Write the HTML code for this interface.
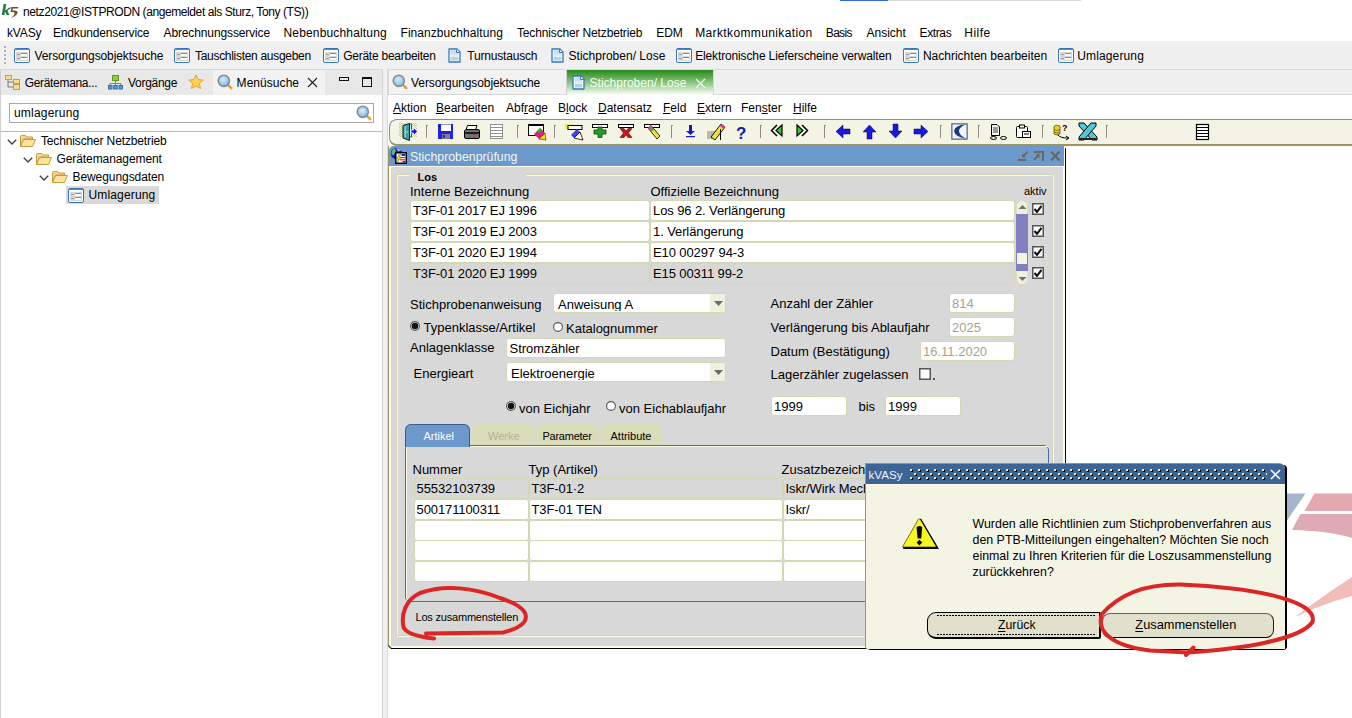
<!DOCTYPE html>
<html><head><meta charset="utf-8">
<style>
*{margin:0;padding:0;box-sizing:border-box}
html,body{width:1352px;height:718px;overflow:hidden;background:#fff;position:relative;font-family:"Liberation Sans",sans-serif;color:#000}
.a{position:absolute;white-space:pre;line-height:1}
.ui{font-size:12px;color:#000;letter-spacing:-0.15px}
.f{font-size:12.5px}
svg{position:absolute;overflow:visible}
</style></head><body>

<svg width="0" height="0" style="position:absolute">
<defs>
<symbol id="frm" viewBox="0 0 16 15"><rect x="0.5" y="0.5" width="15" height="14" rx="1.5" fill="#fff" stroke="#3577b6"/><rect x="1" y="1" width="14" height="1" fill="#3f8fd8"/><rect x="2" y="4" width="12" height="9" fill="#d8d8d8"/><rect x="3" y="6" width="3" height="1" fill="#9a9a9a"/><rect x="3" y="10" width="3" height="1" fill="#9a9a9a"/><rect x="7" y="5" width="6" height="3" fill="#fff"/><rect x="7" y="9" width="6" height="3" fill="#fff"/><rect x="7" y="5" width="6" height="1" fill="#8a8a8a"/><rect x="7" y="9" width="6" height="1" fill="#8a8a8a"/></symbol>
<symbol id="doc" viewBox="0 0 13 15"><linearGradient id="dg" x1="0" y1="0" x2="0" y2="1"><stop offset="0" stop-color="#b8d4e6"/><stop offset="0.6" stop-color="#e8f0f6"/><stop offset="0.62" stop-color="#b4d2e4"/><stop offset="1" stop-color="#b4d2e4"/></linearGradient><path d="M1 1 H9 L12 4 V14 H1 Z" fill="#fff" stroke="#3577b6" stroke-width="1.3" stroke-linejoin="round"/><rect x="2.5" y="2.5" width="8" height="10" fill="url(#dg)"/><path d="M8.5 1.5 V4.5 H11.5" fill="#fff" stroke="#3577b6" stroke-width="1"/></symbol>
<symbol id="mag" viewBox="0 0 16 16"><radialGradient id="mg" cx="0.45" cy="0.4" r="0.65"><stop offset="0" stop-color="#d8f0ff"/><stop offset="0.7" stop-color="#8cc4f0"/><stop offset="1" stop-color="#5aa0e0"/></radialGradient><path d="M10.8 10.8 L12.5 12.5" stroke="#9a9a9a" stroke-width="2.2"/><path d="M12.2 12.2 L14.2 14.2" stroke="#e8a030" stroke-width="2.6" stroke-linecap="round"/><circle cx="6.8" cy="6.8" r="5.6" fill="url(#mg)" stroke="#8a8a8a" stroke-width="1.5"/></symbol>
<symbol id="fold" viewBox="0 0 16 14"><path d="M0.5 2.5 Q0.5 1.5 1.5 1.5 H5.5 L7 3 H12.5 V5 H3.5 L0.5 12.5 Z" fill="#f4d890" stroke="#c89a40" stroke-width="1"/><path d="M0.5 12.5 L3.5 5.5 H15.5 L12.5 12.5 Z" fill="#fce4a0" stroke="#c89a40" stroke-width="1" stroke-linejoin="round"/></symbol>
<symbol id="chev" viewBox="0 0 10 6"><path d="M0.8 0.8 L5 5 L9.2 0.8" fill="none" stroke="#444" stroke-width="1.4"/></symbol>
</defs></svg>
<!-- progress bar top -->
<div class="a" style="left:840px;top:0;width:241px;height:1px;background:#dcdcdc"></div>
<div class="a" style="left:840px;top:0;width:48px;height:1px;background:#2a6ad8"></div>

<!-- title -->
<svg style="left:0;top:0" width="22" height="22" viewBox="0 0 22 22">
<path d="M3.6 4 H6.2 L4.4 15 H1.8 Z" fill="#1f7a48"/>
<path d="M4.6 10.8 L9.6 7.6 H12.2 L7.4 10.6 L9.4 15 H6.8 Z" fill="#1f7a48"/>
<path d="M11.5 7 H18.3 L17.8 8.6 H13 L12.4 10.6 Q17.5 10 17.6 12.6 Q17.4 15.5 11 18 Q14.8 15 14.6 13 Q14.3 11.8 10.6 12.2 Z" fill="#6e5424"/>
</svg>
<div class="a ui" style="left:23.10px;top:6px;letter-spacing:-0.410px">netz2021@ISTPRODN (angemeldet als Sturz, Tony (TS))</div>

<!-- menu bar -->
<div class="a ui" style="left:7px;top:27px">kVASy</div>
<div class="a ui" style="left:52.90px;top:27px;letter-spacing:-0.143px">Endkundenservice</div>
<div class="a ui" style="left:163.50px;top:27px;letter-spacing:-0.121px">Abrechnungsservice</div>
<div class="a ui" style="left:283.50px;top:27px;letter-spacing:0.163px">Nebenbuchhaltung</div>
<div class="a ui" style="left:400.50px;top:27px;letter-spacing:0.056px">Finanzbuchhaltung</div>
<div class="a ui" style="left:517px;top:27px">Technischer Netzbetrieb</div>
<div class="a ui" style="left:656.20px;top:27px;letter-spacing:-0.050px">EDM</div>
<div class="a ui" style="left:695.20px;top:27px;letter-spacing:0.374px">Marktkommunikation</div>
<div class="a ui" style="left:825.80px;top:27px;letter-spacing:-0.675px">Basis</div>
<div class="a ui" style="left:866.50px;top:27px;letter-spacing:0.000px">Ansicht</div>
<div class="a ui" style="left:919.60px;top:27px;letter-spacing:-0.390px">Extras</div>
<div class="a ui" style="left:964.30px;top:27px;letter-spacing:0.475px">Hilfe</div>

<!-- toolbar -->
<div class="a" style="left:0;top:41px;width:1352px;height:29px;background:#f0f0f0;border-bottom:1px solid #dadada"></div>
<div id="toolbar">
<div class="a" style="left:4px;top:46px;width:2px;height:2px;background:#b0b0b0"></div>
<div class="a" style="left:4px;top:50px;width:2px;height:2px;background:#b0b0b0"></div>
<div class="a" style="left:4px;top:54px;width:2px;height:2px;background:#b0b0b0"></div>
<div class="a" style="left:4px;top:58px;width:2px;height:2px;background:#b0b0b0"></div>
<div class="a" style="left:4px;top:62px;width:2px;height:2px;background:#b0b0b0"></div>
<svg style="left:14px;top:48px" width="16" height="15"><use href="#frm"/></svg>
<div class="a ui" style="left:34.50px;top:50px;letter-spacing:-0.120px">Versorgungsobjektsuche</div>
<svg style="left:174px;top:48px" width="16" height="15"><use href="#frm"/></svg>
<div class="a ui" style="left:195.00px;top:50px;letter-spacing:-0.300px">Tauschlisten ausgeben</div>
<svg style="left:323px;top:48px" width="16" height="15"><use href="#frm"/></svg>
<div class="a ui" style="left:343.20px;top:50px;letter-spacing:-0.249px">Geräte bearbeiten</div>
<svg style="left:448px;top:48px" width="13" height="15"><use href="#doc"/></svg>
<div class="a ui" style="left:467.20px;top:50px;letter-spacing:-0.177px">Turnustausch</div>
<svg style="left:551px;top:48px" width="13" height="15"><use href="#doc"/></svg>
<div class="a ui" style="left:568.60px;top:50px;letter-spacing:-0.001px">Stichproben/ Lose</div>
<svg style="left:676px;top:48px" width="16" height="15"><use href="#frm"/></svg>
<div class="a ui" style="left:695.20px;top:50px;letter-spacing:-0.139px">Elektronische Lieferscheine verwalten</div>
<svg style="left:903px;top:48px" width="16" height="15"><use href="#frm"/></svg>
<div class="a ui" style="left:922.90px;top:50px;letter-spacing:0.007px">Nachrichten bearbeiten</div>
<svg style="left:1058px;top:48px" width="16" height="15"><use href="#frm"/></svg>
<div class="a ui" style="left:1077.30px;top:50px;letter-spacing:0.127px">Umlagerung</div>
</div>

<!-- left panel -->
<div class="a" style="left:0;top:69px;width:383px;height:650px;background:#fff;border:1px solid #d0d0d0;border-top-color:#d8d8d8;border-bottom:none"></div>
<div class="a" style="left:1px;top:70px;width:381px;height:25px;background:#e8e8e8"></div>
<div class="a" style="left:213px;top:70px;width:112px;height:25px;background:#f2f2f2"></div>
<div class="a" style="left:382px;top:69px;width:6px;height:649px;background:#f0f0f0;border-left:1px solid #d4d4d4;border-right:1px solid #d8d8d8"></div>
<div id="lefttabs">
<svg style="left:5px;top:75px" width="16" height="15" viewBox="0 0 16 15"><path d="M3 3 V12 H9 M3 7 H9" fill="none" stroke="#7a7a7a" stroke-width="1"/><rect x="0.5" y="0.5" width="6" height="4" fill="#f8dc90" stroke="#c8a040"/><rect x="8.5" y="4.5" width="6" height="4" fill="#f8dc90" stroke="#c8a040"/><rect x="8.5" y="9.5" width="6" height="5" fill="#f8dc90" stroke="#c8a040"/></svg>
<div class="a ui" style="left:24.70px;top:77px;letter-spacing:-0.316px">Gerätemana...</div>
<svg style="left:108px;top:75px" width="15" height="15" viewBox="0 0 15 15"><rect x="4.5" y="0.5" width="6" height="5" fill="#8cd040" stroke="#5a9a20"/><path d="M7.5 6 V8 M2 10 V8.5 H13 V10 M7.5 8.5 V10" fill="none" stroke="#808080"/><rect x="0.5" y="10.5" width="3.5" height="3.5" fill="#5a9ad8" stroke="#3070b0"/><rect x="5.75" y="10.5" width="3.5" height="3.5" fill="#5a9ad8" stroke="#3070b0"/><rect x="11" y="10.5" width="3.5" height="3.5" fill="#5a9ad8" stroke="#3070b0"/></svg>
<div class="a ui" style="left:128.00px;top:77px;letter-spacing:-0.293px">Vorgänge</div>
<svg style="left:188px;top:74px" width="16" height="16" viewBox="0 0 16 16"><path d="M8 0.8 L10.2 5.5 L15.2 6 L11.4 9.4 L12.5 14.5 L8 11.9 L3.5 14.5 L4.6 9.4 L0.8 6 L5.8 5.5 Z" fill="#fcd050" stroke="#e0a030" stroke-width="0.9" stroke-linejoin="round"/></svg>
<svg style="left:217px;top:74px" width="16" height="16"><use href="#mag"/></svg>
<div class="a ui" style="left:236.60px;top:77px;letter-spacing:0.050px">Menüsuche</div>
<svg style="left:307px;top:77px" width="11" height="11" viewBox="0 0 11 11"><path d="M1 1 L10 10 M10 1 L1 10" stroke="#222" stroke-width="1.1"/></svg>
<div class="a" style="left:339px;top:77px;width:10px;height:4px;border:1.5px solid #111"></div>
<div class="a" style="left:362px;top:77px;width:10px;height:10px;border:1.5px solid #111;border-top-width:2.5px"></div>
</div>
<!-- search -->
<div class="a" style="left:9px;top:103px;width:365px;height:20px;border:1px solid #a8a8a8;background:#fff"></div>
<div class="a ui" style="left:13.90px;top:107px;letter-spacing:0.217px">umlagerung</div>
<svg style="left:356px;top:105px" width="16" height="16"><use href="#mag"/></svg>
<div class="a" style="left:1px;top:131px;width:381px;height:1px;background:#b8b8b8"></div>
<div id="tree">
<svg style="left:7px;top:139px" width="10" height="6"><use href="#chev"/></svg>
<svg style="left:20px;top:134px" width="16" height="14"><use href="#fold"/></svg>
<div class="a ui" style="left:40.90px;top:135px;letter-spacing:-0.136px">Technischer Netzbetrieb</div>
<svg style="left:23px;top:157px" width="10" height="6"><use href="#chev"/></svg>
<svg style="left:36px;top:152px" width="16" height="14"><use href="#fold"/></svg>
<div class="a ui" style="left:56.50px;top:153px;letter-spacing:-0.090px">Gerätemanagement</div>
<svg style="left:39px;top:175px" width="10" height="6"><use href="#chev"/></svg>
<svg style="left:52px;top:170px" width="16" height="14"><use href="#fold"/></svg>
<div class="a ui" style="left:72.50px;top:171px;letter-spacing:-0.073px">Bewegungsdaten</div>
<div class="a" style="left:66px;top:186px;width:93px;height:18px;background:#d9d9d9"></div>
<svg style="left:68px;top:188px" width="16" height="15"><use href="#frm"/></svg>
<div class="a ui" style="left:88.50px;top:189px;letter-spacing:0.150px">Umlagerung</div>
</div>

<!-- right panel -->
<div class="a" style="left:388px;top:69px;width:964px;height:26px;background:#f0f0f0;border-top:1px solid #d8d8d8"></div>
<div class="a" style="left:388px;top:69px;width:179px;height:26px;background:#f2f2f2;border:1px solid #d8d8d8;border-right-color:#d0d0d0"></div>
<div class="a" style="left:567px;top:70px;width:146px;height:25px;background:linear-gradient(#24881a,#4ea040 20%,#8cc480 50%,#d0e8c8 80%,#fff)"></div>
<div class="a" style="left:388px;top:95px;width:964px;height:623px;background:#fff"></div>
<div class="a" style="left:713px;top:69px;width:639px;height:26px;border-left:1px solid #d8d8d8;border-top:1px solid #d8d8d8;border-bottom:1px solid #d8d8d8"></div>
<div id="righttabs">
<svg style="left:392px;top:74px" width="16" height="16"><use href="#mag"/></svg>
<div class="a ui" style="left:411.10px;top:77px;letter-spacing:-0.111px">Versorgungsobjektsuche</div>
<svg style="left:572px;top:75px" width="13" height="15"><use href="#doc"/></svg>
<div class="a ui" style="left:589.6px;top:77px;letter-spacing:-0.001px;color:#f4fff0">Stichproben/ Lose</div>
<svg style="left:695px;top:78px" width="11" height="11" viewBox="0 0 11 11"><path d="M1 1 L10 10 M10 1 L1 10" stroke="#f0fff0" stroke-width="1.1"/></svg>
</div>

<!-- oracle menubar -->
<div class="a" style="left:393px;top:102px;font-size:12px;"><u style="text-decoration:underline;text-underline-offset:1px">A</u>ktion</div>
<div class="a" style="left:436px;top:102px;font-size:12px;"><u style="text-decoration:underline;text-underline-offset:1px">B</u>earbeiten</div>
<div class="a" style="left:506px;top:102px;font-size:12px;">Abf<u style="text-decoration:underline;text-underline-offset:1px">r</u>age</div>
<div class="a" style="left:558px;top:102px;font-size:12px;">B<u style="text-decoration:underline;text-underline-offset:1px">l</u>ock</div>
<div class="a" style="left:598px;top:102px;font-size:12px;"><u style="text-decoration:underline;text-underline-offset:1px">D</u>atensatz</div>
<div class="a" style="left:663px;top:102px;font-size:12px;"><u style="text-decoration:underline;text-underline-offset:1px">F</u>eld</div>
<div class="a" style="left:697px;top:102px;font-size:12px;"><u style="text-decoration:underline;text-underline-offset:1px">E</u>xtern</div>
<div class="a" style="left:741px;top:102px;font-size:12px;">Fen<u style="text-decoration:underline;text-underline-offset:1px">s</u>ter</div>
<div class="a" style="left:793px;top:102px;font-size:12px;"><u style="text-decoration:underline;text-underline-offset:1px">H</u>ilfe</div>
<div class="a" style="left:389px;top:119px;width:963px;height:27px;background:#f4f4e4;border-top:1px solid #8e8e8e;border-bottom:2px solid #9c9664;border-radius:8px 0 0 8px;border-left:1px solid #8e8e8e"></div>
<!-- oracle toolbar icons -->
<svg style="left:0;top:0" width="1352" height="718" viewBox="0 0 1352 718">
<defs>
<pattern id="chk" width="2" height="2" patternUnits="userSpaceOnUse"><rect width="2" height="2" fill="#f4f4e4"/><rect width="1" height="1" fill="#c8c8a8"/><rect x="1" y="1" width="1" height="1" fill="#c8c8a8"/></pattern>
</defs>
<!-- separators -->
<g fill="#8c8c8c">
<path d="M426 125h2v1h-1v12h-1z"/><path d="M517 125h2v1h-1v12h-1z"/><path d="M554 125h2v1h-1v12h-1z"/><path d="M671 125h2v1h-1v12h-1z"/>
<path d="M760 125h2v1h-1v12h-1z"/><path d="M824 125h2v1h-1v12h-1z"/><path d="M940 125h2v1h-1v12h-1z"/><path d="M978 125h2v1h-1v12h-1z"/>
<path d="M1042 125h2v1h-1v12h-1z"/><path d="M1106 125h2v1h-1v12h-1z"/>
</g>
<!-- exit -->
<rect x="399" y="123" width="18" height="14" fill="url(#chk)"/>
<path d="M409 124 H411.5 V137 H409 Z" fill="#a8f0f8" stroke="#203838" stroke-width="0.8"/>
<path d="M403 125.5 L409.5 123.5 V140.5 L403 138 Z" fill="#3a9ca4" stroke="#102828" stroke-width="1"/>
<path d="M404.5 126.5 L406 126 V137.5 L404.5 137 Z" fill="#8ad0d8"/>
<circle cx="407.2" cy="132" r="0.8" fill="#f0f040"/>
<path d="M411 130 H413.5 V127.5 L417.5 131.5 L413.5 135.5 V133 H411 Z" fill="#1818f0" stroke="#fff" stroke-width="0.7"/>
<!-- floppy -->
<path d="M438 124 H453 V139 H438 Z" fill="#2020f0"/>
<rect x="441" y="124.5" width="10" height="6.5" fill="#fff"/>
<rect x="442" y="134" width="8" height="5" fill="#808080"/><rect x="443" y="135" width="2" height="3" fill="#2020f0"/>
<rect x="439" y="126" width="1" height="1" fill="#000"/>
<!-- printer -->
<path d="M467.5 125.5 H477 L475.5 130 H466 Z" fill="#fff" stroke="#000" stroke-width="1"/>
<path d="M464.5 131 Q465 129.5 467 129.5 H478 Q479.5 129.5 479.5 131 V137 Q479.5 138.5 478 138.5 H466 Q464.5 138.5 464.5 137 Z" fill="#707070" stroke="#000" stroke-width="1"/>
<rect x="465" y="132" width="14" height="2" fill="#202020"/><rect x="473" y="134" width="2" height="1" fill="#e02020"/>
<!-- list gray -->
<rect x="490.5" y="124.5" width="12" height="14" fill="#fff" stroke="#909090"/>
<path d="M491 127.5h11M491 130.5h11M491 133.5h11M491 136.5h11" stroke="#909090"/>
<!-- query window pencil -->
<rect x="528.5" y="124.5" width="15" height="11" fill="#fff" stroke="#000"/><rect x="528" y="124" width="16" height="2" fill="#000"/>
<path d="M534 134 L540 128 L545 133 L539 139 Z" fill="#e02080"/><path d="M537 131 L540 128 L542 130 L539 133Z" fill="#20c020"/><path d="M539 139 L545 133 L546 140 Z" fill="#f0e020" stroke="#000" stroke-width="0.5"/>
<!-- highlighter -->
<rect x="565" y="124" width="8" height="5" fill="#f0f040"/><rect x="568" y="125.5" width="14" height="4" fill="#fff" stroke="#000" stroke-width="1"/>
<path d="M571 135 L577 129 L580 132 L574 138 Z" fill="#4040e0"/><path d="M574 138 L580 132 L583 140 Z" fill="#fff" stroke="#000" stroke-width="0.8"/>
<!-- green plus -->
<rect x="592.5" y="124.5" width="15" height="3" fill="#fff" stroke="#000"/>
<path d="M598 127 H602 V130 H606 V134 H602 V137.5 H598 V134 H594 V130 H598 Z" fill="#20a020" stroke="#104010" stroke-width="0.8"/>
<!-- red X -->
<rect x="618.5" y="124.5" width="15" height="3" fill="#fff" stroke="#000"/>
<path d="M620 128.5 L624 128.5 L626 131 L628 128.5 L632 128.5 L628.5 133 L632 137.5 L628 137.5 L626 135 L624 137.5 L620 137.5 L623.5 133 Z" fill="#c01818" stroke="#501010" stroke-width="0.6"/>
<!-- pencil clear -->
<rect x="644.5" y="124.5" width="15" height="3" fill="#fff" stroke="#000"/>
<path d="M648 128 L651 125.5 L660 136 L657 139 Z" fill="#f0e040" stroke="#000" stroke-width="0.8"/><path d="M648 128 L651 125.5 L653 128 L650 130.5Z" fill="#e040a0"/><path d="M650 130.5 L653 128 L654 129.5 L651 132Z" fill="#30b030"/>
<!-- blue down -->
<path d="M689 125 H692 V131 H695 L690.5 135 L686 131 H689 Z" fill="#1818c8"/><rect x="686" y="136" width="9" height="1.2" fill="#1818c8"/>
<!-- pencil lines -->
<path d="M707 132h8M707 134h7M707 136h8M707 138h6" stroke="#606060" stroke-width="0.8"/>
<path d="M711 137 L721 124 L725 127 L715 140 Z" fill="#f0e040" stroke="#000" stroke-width="0.9"/><path d="M721 124 L725 127 L723.5 129 L719.5 126Z" fill="#e040a0"/><rect x="720" y="129" width="1" height="11" fill="#000"/>
<!-- ? -->
<text x="736" y="139" font-family="Liberation Sans" font-weight="bold" font-size="17" fill="#1818a8">?</text>
<!-- << >> -->
<path d="M782 125 L776 130.5 L782 136 Z" fill="#30d030" stroke="#000" stroke-width="1.2"/><path d="M777 125 L771.5 130.5 L777 136" fill="none" stroke="#000" stroke-width="1.5"/>
<path d="M797 125 L803 130.5 L797 136 Z" fill="#30d030" stroke="#000" stroke-width="1.2"/><path d="M802 125 L807.5 130.5 L802 136" fill="none" stroke="#000" stroke-width="1.5"/>
<!-- arrows -->
<path d="M836 131.5 L843 125 V129 H850 V134 H843 V138 Z" fill="#1818e8" stroke="#000030" stroke-width="0.5"/>
<path d="M869.5 125 L876 132 H872 V139 H867 V132 H863 Z" fill="#1818e8" stroke="#000030" stroke-width="0.5"/>
<path d="M895.5 138 L902 131 H898 V124 H893 V131 H889 Z" fill="#1818e8" stroke="#000030" stroke-width="0.5"/>
<path d="M928 131.5 L921 125 V129 H914 V134 H921 V138 Z" fill="#1818e8" stroke="#000030" stroke-width="0.5"/>
<!-- moon -->
<rect x="951" y="123" width="17" height="17" fill="#a8b8c8"/><rect x="952" y="124" width="15" height="15" fill="#f0f4f8" stroke="#304870" stroke-width="0.8"/>
<path d="M966 124.5 Q955 125 954 131 Q955 137 966 138.5 Q959 135 959 131 Q959 127 966 124.5 Z" fill="#1a3a80"/>
<!-- doc glasses -->
<path d="M991.5 124.5 H997 L999.5 127 V135.5 H991.5 Z" fill="#fff" stroke="#000" stroke-width="1"/><path d="M993 128h5M993 130h5M993 132h5" stroke="#000" stroke-width="0.8"/>
<ellipse cx="993.5" cy="138" rx="3" ry="1.5" fill="none" stroke="#000" stroke-width="1"/><ellipse cx="1003.5" cy="138" rx="3" ry="1.5" fill="none" stroke="#000" stroke-width="1"/>
<!-- clipboard -->
<rect x="1016.5" y="126.5" width="11" height="11" rx="1" fill="#fff" stroke="#000"/><rect x="1019.5" y="125" width="5" height="3" fill="#fff" stroke="#000"/>
<rect x="1022.5" y="131.5" width="8" height="6" fill="#fff" stroke="#000"/><path d="M1024 134h5" stroke="#000"/>
<!-- db ? -->
<ellipse cx="1057" cy="127" rx="3" ry="1.8" fill="#f0d020" stroke="#404000" stroke-width="0.7"/><path d="M1054 127 V134 Q1057 136 1060 134 V127" fill="#f0d020" stroke="#404000" stroke-width="0.7"/><path d="M1054 129.5 Q1057 131.5 1060 129.5M1054 132 Q1057 134 1060 132" fill="none" stroke="#404000" stroke-width="0.6"/>
<text x="1062" y="131" font-family="Liberation Sans" font-weight="bold" font-size="9" fill="#000">?</text>
<path d="M1058 135 Q1060 138 1068 138" fill="none" stroke="#000" stroke-width="1"/><path d="M1066 136 L1069 138 L1066 140" fill="none" stroke="#000" stroke-width="1"/>
<!-- excel X -->
<path d="M1079 123 H1084 L1097 137 V140 H1092 L1079 126 Z" fill="#50c8d8" stroke="#000" stroke-width="1"/>
<path d="M1096 123 H1091 L1079 137 V140 H1084 L1096 126 Z" fill="#50c8d8" stroke="#000" stroke-width="1"/>
<rect x="1079" y="138" width="18" height="2" fill="#202020"/>
<!-- list right -->
<rect x="1196.5" y="124.5" width="12" height="15" fill="#fff" stroke="#000" stroke-width="1.2"/>
<path d="M1197 127.5h11M1197 130.5h11M1197 133.5h11M1197 136.5h11" stroke="#000" stroke-width="1.2"/>
</svg>

<!-- form window -->
<div class="a" style="left:388px;top:146px;width:678px;height:503px;background:#000;clip-path:polygon(0 0,calc(100% - 2px) 0,100% 3px,100% 100%,3px 100%,0 calc(100% - 3px))"></div>
<div class="a" style="left:388px;top:146px;width:677px;height:502px;background:#9c9664;clip-path:polygon(0 0,100% 0,100% 100%,3px 100%,0 calc(100% - 3px))"></div>
<div class="a" style="left:389px;top:146px;width:676px;height:502px;background:#fcfce8;clip-path:polygon(0 0,100% 0,100% 100%,3px 100%,0 calc(100% - 3px))"></div>
<div class="a" style="left:391px;top:167px;width:672px;height:479px;background:#d8d8d8"></div>
<div class="a" style="left:389px;top:146px;width:675px;height:20px;background:#6c98cc;clip-path:polygon(3px 0,100% 0,100% 100%,0 100%,0 3px)"></div>
<div class="a" style="left:410px;top:151px;font-size:12.3px;color:#eef8e8">Stichprobenprüfung</div>
<svg style="left:390px;top:147px" width="18" height="18" viewBox="0 0 18 18">
<circle cx="6.5" cy="6.5" r="5.8" fill="#1a1a9a"/><path d="M1.2 7 Q1.5 2.5 5 1.2 L6 4 L3.5 8.5 Z" fill="#58b878"/><path d="M6 1 Q10 1 11.5 3.5 L8 4.5Z" fill="#a8a8f0"/>
<rect x="5" y="5" width="12" height="12" fill="#000"/><rect x="6.5" y="6.5" width="9" height="9" fill="#fff"/>
<path d="M9.5 6.8 L6.8 11.8 H8.8 L7.2 15.5 L11.2 10.2 H9.2 L11 6.8 Z" fill="#f8f820" stroke="#303000" stroke-width="0.4"/>
<rect x="11.5" y="7" width="3.5" height="2" fill="#2020e8"/><rect x="10.5" y="10" width="4.5" height="1.2" fill="#e82020"/><rect x="10" y="12.2" width="5" height="1.2" fill="#e82020"/><rect x="12.5" y="14" width="2.5" height="1.5" fill="#2020e8"/>
</svg>
<svg style="left:1010px;top:145px" width="56" height="20" viewBox="1010 145 56 20">
<g fill="#6a6660">
<rect x="1018" y="159" width="8" height="2"/>
<path d="M1027 151 L1028.3 152.3 L1024.6 156 L1026 157.4 H1022 V153.4 L1023.3 154.7 Z"/>
<rect x="1034" y="151" width="10" height="2"/><rect x="1042" y="151" width="2" height="10"/>
<path d="M1034.7 160.5 L1033.4 159.2 L1037.1 155.5 L1035.7 154.1 H1039.7 V158.1 L1038.4 156.8 Z"/>
</g>
<path d="M1051 151.5 L1059.5 160.5 M1059.5 151.5 L1051 160.5" stroke="#6a6660" stroke-width="2.1"/>
</svg>
<div class="a" style="left:397px;top:175px;width:657px;height:462px;border:1px solid #f8f8e4"></div>
<div class="a" style="left:396px;top:174px;width:657px;height:462px;border:1px solid #d2d6b4"></div>
<div class="a" style="left:410px;top:173px;width:116px;height:4px;background:#d8d8d8"></div>
<div class="a" style="left:417.5px;top:172px;font-size:11px;font-weight:bold">Los</div>
<!-- fields -->
<div class="a" style="left:410px;top:184.7px;font-size:13px;">Interne Bezeichnung</div>
<div class="a" style="left:650.5px;top:184.7px;font-size:13px;">Offizielle Bezeichnung</div>
<div class="a" style="left:1024px;top:186.3px;font-size:11px;">aktiv</div>
<div class="a" style="left:410px;top:200px;width:240px;height:21px;background:#fff;border:1px solid #d4d8b0;border-radius:3px;"></div>
<div class="a" style="left:650px;top:200px;width:365px;height:21px;background:#fff;border:1px solid #d4d8b0;border-radius:3px;"></div>
<div class="a" style="left:413px;top:203.6px;font-size:13px;letter-spacing:-0.1px">T3F-01 2017 EJ 1996</div>
<div class="a" style="left:653px;top:203.6px;font-size:13px;letter-spacing:-0.1px">Los 96 2. Verlängerung</div>
<div class="a" style="left:410px;top:221px;width:240px;height:21px;background:#fff;border:1px solid #d4d8b0;border-radius:3px;"></div>
<div class="a" style="left:650px;top:221px;width:365px;height:21px;background:#fff;border:1px solid #d4d8b0;border-radius:3px;"></div>
<div class="a" style="left:413px;top:224.6px;font-size:13px;letter-spacing:-0.1px">T3F-01 2019 EJ 2003</div>
<div class="a" style="left:653px;top:224.6px;font-size:13px;letter-spacing:-0.1px">1. Verlängerung</div>
<div class="a" style="left:410px;top:242px;width:240px;height:21px;background:#fff;border:1px solid #d4d8b0;border-radius:3px;"></div>
<div class="a" style="left:650px;top:242px;width:365px;height:21px;background:#fff;border:1px solid #d4d8b0;border-radius:3px;"></div>
<div class="a" style="left:413px;top:245.6px;font-size:13px;letter-spacing:-0.1px">T3F-01 2020 EJ 1994</div>
<div class="a" style="left:653px;top:245.6px;font-size:13px;letter-spacing:-0.1px">E10 00297 94-3</div>
<div class="a" style="left:410px;top:263px;width:240px;height:21px;background:#d8d8d8;border:1px solid #d4d8b0;border-radius:3px;"></div>
<div class="a" style="left:650px;top:263px;width:365px;height:21px;background:#d8d8d8;border:1px solid #d4d8b0;border-radius:3px;"></div>
<div class="a" style="left:413px;top:266.6px;font-size:13px;letter-spacing:-0.1px">T3F-01 2020 EJ 1999</div>
<div class="a" style="left:653px;top:266.6px;font-size:13px;letter-spacing:-0.1px">E15 00311 99-2</div>
<div class="a" style="left:1016px;top:200px;width:12px;height:85px;background:#f0f0dc;border:1px solid #dcdcc0;border-radius:6px"></div>
<div class="a" style="left:1016px;top:214px;width:12px;height:57px;background:#8080c0"></div>
<div class="a" style="left:1017px;top:253px;width:10px;height:11px;background:#f4f4e4"></div>
<svg style="left:1018px;top:204px" width="9" height="6" viewBox="0 0 9 6"><path d="M0.5 5 L4.5 1 L8.5 5Z" fill="#707070"/></svg>
<svg style="left:1018px;top:276px" width="9" height="6" viewBox="0 0 9 6"><path d="M0.5 1 L4.5 5 L8.5 1Z" fill="#707070"/></svg>
<svg style="left:1032px;top:203px" width="12" height="12" viewBox="0 0 12 12"><rect x="0.75" y="0.75" width="10.5" height="10.5" fill="#fff" stroke="#555" stroke-width="1.5"/><path d="M2.5 6 L5 8.8 L9.5 2.8" fill="none" stroke="#111" stroke-width="2.1"/></svg>
<div class="a" style="left:1046px;top:213px;width:1px;height:1px;background:#e8e8c8"></div>
<svg style="left:1032px;top:225px" width="12" height="12" viewBox="0 0 12 12"><rect x="0.75" y="0.75" width="10.5" height="10.5" fill="#fff" stroke="#555" stroke-width="1.5"/><path d="M2.5 6 L5 8.8 L9.5 2.8" fill="none" stroke="#111" stroke-width="2.1"/></svg>
<div class="a" style="left:1046px;top:235px;width:1px;height:1px;background:#e8e8c8"></div>
<svg style="left:1032px;top:246px" width="12" height="12" viewBox="0 0 12 12"><rect x="0.75" y="0.75" width="10.5" height="10.5" fill="#fff" stroke="#555" stroke-width="1.5"/><path d="M2.5 6 L5 8.8 L9.5 2.8" fill="none" stroke="#111" stroke-width="2.1"/></svg>
<div class="a" style="left:1046px;top:256px;width:1px;height:1px;background:#e8e8c8"></div>
<svg style="left:1032px;top:267px" width="12" height="12" viewBox="0 0 12 12"><rect x="0.75" y="0.75" width="10.5" height="10.5" fill="#fff" stroke="#555" stroke-width="1.5"/><path d="M2.5 6 L5 8.8 L9.5 2.8" fill="none" stroke="#111" stroke-width="2.1"/></svg>
<div class="a" style="left:1046px;top:277px;width:1px;height:1px;background:#e8e8c8"></div>
<div class="a" style="left:410px;top:297.8px;font-size:13px;">Stichprobenanweisung</div>
<div class="a" style="left:553px;top:293px;width:173px;height:20px;background:#fff;border:1px solid #d4d8b0;border-radius:3px;"></div>
<div class="a" style="left:710px;top:294px;width:15px;height:18px;background:#f0f0dc"></div>
<svg style="left:714px;top:301px" width="9" height="5" viewBox="0 0 9 5"><path d="M0 0 H9 L4.5 5Z" fill="#6a6a6a"/></svg>
<div class="a" style="left:558px;top:295px;width:150px;height:16px;overflow:hidden"><div class="a" style="left:0;top:2.6px;font-size:13px">Anweisung A</div></div>
<svg style="left:410px;top:321px" width="10" height="10" viewBox="0 0 10 10"><circle cx="5" cy="5" r="4.4" fill="#fff" stroke="#555" stroke-width="1.1"/><circle cx="5" cy="5" r="3.3" fill="#111"/></svg>
<div class="a" style="left:423.5px;top:320.8px;font-size:13px;">Typenklasse/Artikel</div>
<svg style="left:553px;top:322px" width="10" height="10" viewBox="0 0 10 10"><circle cx="5" cy="5" r="4.4" fill="#fff" stroke="#555" stroke-width="1.1"/></svg>
<div class="a" style="left:566px;top:321.7px;font-size:13px;">Katalognummer</div>
<div class="a" style="left:410px;top:341.4px;font-size:13px;">Anlagenklasse</div>
<div class="a" style="left:506px;top:338px;width:220px;height:20px;background:#fff;border:1px solid #d4d8b0;border-radius:3px;"></div>
<div class="a" style="left:509.5px;top:341.7px;font-size:13px;">Stromzähler</div>
<div class="a" style="left:413.5px;top:366.5px;font-size:13px;">Energieart</div>
<div class="a" style="left:506px;top:362px;width:220px;height:20px;background:#fff;border:1px solid #d4d8b0;border-radius:3px;"></div>
<div class="a" style="left:710px;top:363px;width:15px;height:18px;background:#f0f0dc"></div>
<svg style="left:714px;top:370px" width="9" height="5" viewBox="0 0 9 5"><path d="M0 0 H9 L4.5 5Z" fill="#6a6a6a"/></svg>
<div class="a" style="left:508px;top:364px;width:200px;height:16px;overflow:hidden"><div class="a" style="left:3px;top:2.7px;font-size:13px">Elektroenergie</div></div>
<svg style="left:506px;top:401px" width="10" height="10" viewBox="0 0 10 10"><circle cx="5" cy="5" r="4.4" fill="#fff" stroke="#555" stroke-width="1.1"/><circle cx="5" cy="5" r="3.3" fill="#111"/></svg>
<div class="a" style="left:519px;top:401.7px;font-size:13px;">von Eichjahr</div>
<svg style="left:606px;top:401px" width="10" height="10" viewBox="0 0 10 10"><circle cx="5" cy="5" r="4.4" fill="#fff" stroke="#555" stroke-width="1.1"/></svg>
<div class="a" style="left:619px;top:401.7px;font-size:13px;">von Eichablaufjahr</div>
<div class="a" style="left:770.5px;top:296.6px;font-size:13px;">Anzahl der Zähler</div>
<div class="a" style="left:949px;top:293px;width:66px;height:20px;background:#fff;border:1px solid #d4d8b0;border-radius:3px;"></div>
<div class="a" style="left:952px;top:296.6px;font-size:13px;color:#a4a48c">814</div>
<div class="a" style="left:770.5px;top:320.8px;font-size:13px;">Verlängerung bis Ablaufjahr</div>
<div class="a" style="left:949px;top:317px;width:66px;height:20px;background:#fff;border:1px solid #d4d8b0;border-radius:3px;"></div>
<div class="a" style="left:952px;top:320.8px;font-size:13px;color:#a4a48c">2025</div>
<div class="a" style="left:770.5px;top:344.7px;font-size:13px;">Datum (Bestätigung)</div>
<div class="a" style="left:919.5px;top:341px;width:95.5px;height:20px;background:#fff;border:1px solid #d4d8b0;border-radius:3px;"></div>
<div class="a" style="left:923px;top:344.7px;font-size:13px;color:#a4a48c">16.11.2020</div>
<div class="a" style="left:770.5px;top:368.3px;font-size:13px;">Lagerzähler zugelassen</div>
<svg style="left:919px;top:368px" width="12" height="12" viewBox="0 0 12 12"><rect x="0.75" y="0.75" width="10.5" height="10.5" fill="#fff" stroke="#555" stroke-width="1.5"/></svg>
<div class="a" style="left:933px;top:378px;width:1.5px;height:1.5px;background:#555"></div>
<div class="a" style="left:770.5px;top:396px;width:76px;height:20px;background:#fff;border:1px solid #d4d8b0;border-radius:3px;"></div>
<div class="a" style="left:774px;top:399.5px;font-size:13px;">1999</div>
<div class="a" style="left:858.5px;top:399.5px;font-size:13px;">bis</div>
<div class="a" style="left:884.5px;top:396px;width:76px;height:20px;background:#fff;border:1px solid #d4d8b0;border-radius:3px;"></div>
<div class="a" style="left:888px;top:399.5px;font-size:13px;">1999</div>
<!-- tabs -->
<div class="a" style="left:405px;top:445px;width:644px;height:157px;border:1px solid #4a6aa8;border-radius:0 5px 5px 5px"></div>
<div class="a" style="left:406px;top:446px;width:642px;height:155px;border-top:1.5px solid #f8f8e0;border-left:1.5px solid #f8f8e0;border-radius:0 0 4px 4px"></div>
<div class="a" style="left:472px;top:424px;width:61px;height:21px;background:#d8dcb8;border-radius:5px 5px 0 0"></div>
<div class="a" style="left:536px;top:424px;width:61px;height:21px;background:#d8dcb8;border-radius:5px 5px 0 0"></div>
<div class="a" style="left:600px;top:424px;width:61px;height:21px;background:#d8dcb8;border-radius:5px 5px 0 0"></div>
<div class="a" style="left:405px;top:424px;width:65px;height:23px;background:#6c98cc;border:1px solid #3a5a98;border-bottom:none;border-radius:6px 6px 0 0"></div>
<div class="a" style="left:423.5px;top:431.3px;font-size:11px;color:#fff">Artikel</div>
<div class="a" style="left:488px;top:431.3px;font-size:11px;color:#b4b494">Werke</div>
<div class="a" style="left:542.5px;top:431.3px;font-size:11px;letter-spacing:-0.25px">Parameter</div>
<div class="a" style="left:610.5px;top:431.3px;font-size:11px;">Attribute</div>
<div class="a" style="left:412.5px;top:462.6px;font-size:13px;">Nummer</div>
<div class="a" style="left:528.5px;top:462.6px;font-size:13px;">Typ (Artikel)</div>
<div class="a" style="left:781.5px;top:463.0px;font-size:13px;">Zusatzbezeichnung</div>
<div class="a" style="left:413.5px;top:478px;width:115px;height:21px;background:#d8d8d8;border:1px solid #d4d8b0;border-radius:3px;"></div>
<div class="a" style="left:528.5px;top:478px;width:254px;height:21px;background:#d8d8d8;border:1px solid #d4d8b0;border-radius:3px;"></div>
<div class="a" style="left:782.5px;top:478px;width:258px;height:21px;background:#d8d8d8;border:1px solid #d4d8b0;border-radius:3px;"></div>
<div class="a" style="left:416.5px;top:481.5px;font-size:13px;letter-spacing:-0.1px">55532103739</div>
<div class="a" style="left:531.5px;top:481.5px;font-size:13px;letter-spacing:-0.1px">T3F-01·2</div>
<div class="a" style="left:785.5px;top:481.5px;font-size:13px;letter-spacing:-0.1px">Iskr/Wirk Mech</div>
<div class="a" style="left:413.5px;top:499px;width:115px;height:21px;background:#fff;border:1px solid #d4d8b0;border-radius:3px;"></div>
<div class="a" style="left:528.5px;top:499px;width:254px;height:21px;background:#fff;border:1px solid #d4d8b0;border-radius:3px;"></div>
<div class="a" style="left:782.5px;top:499px;width:258px;height:21px;background:#fff;border:1px solid #d4d8b0;border-radius:3px;"></div>
<div class="a" style="left:416.5px;top:502.5px;font-size:13px;letter-spacing:-0.1px">500171100311</div>
<div class="a" style="left:531.5px;top:502.5px;font-size:13px;letter-spacing:-0.1px">T3F-01 TEN</div>
<div class="a" style="left:785.5px;top:502.5px;font-size:13px;letter-spacing:-0.1px">Iskr/</div>
<div class="a" style="left:413.5px;top:520px;width:115px;height:21px;background:#fff;border:1px solid #d4d8b0;border-radius:3px;"></div>
<div class="a" style="left:528.5px;top:520px;width:254px;height:21px;background:#fff;border:1px solid #d4d8b0;border-radius:3px;"></div>
<div class="a" style="left:782.5px;top:520px;width:258px;height:21px;background:#fff;border:1px solid #d4d8b0;border-radius:3px;"></div>
<div class="a" style="left:413.5px;top:540px;width:115px;height:21px;background:#fff;border:1px solid #d4d8b0;border-radius:3px;"></div>
<div class="a" style="left:528.5px;top:540px;width:254px;height:21px;background:#fff;border:1px solid #d4d8b0;border-radius:3px;"></div>
<div class="a" style="left:782.5px;top:540px;width:258px;height:21px;background:#fff;border:1px solid #d4d8b0;border-radius:3px;"></div>
<div class="a" style="left:413.5px;top:561px;width:115px;height:21px;background:#fff;border:1px solid #d4d8b0;border-radius:3px;"></div>
<div class="a" style="left:528.5px;top:561px;width:254px;height:21px;background:#fff;border:1px solid #d4d8b0;border-radius:3px;"></div>
<div class="a" style="left:782.5px;top:561px;width:258px;height:21px;background:#fff;border:1px solid #d4d8b0;border-radius:3px;"></div>
<div class="a" style="left:411px;top:607px;width:113px;height:19px;background:#d8d8d8;border:1px solid #d8dcb4;border-radius:3px;"></div>
<div class="a" style="left:415.5px;top:611.7px;font-size:11px;letter-spacing:-0.2px">Los zusammenstellen</div>
<svg style="left:1280px;top:488px" width="72" height="135" viewBox="1280 488 72 135">
<path d="M1286 493.5 H1305.5 L1286 522 Z" fill="#a4b6cc"/>
<path d="M1314.5 493.5 H1352 V511 H1304.5 Z" fill="#e4a8b0"/>
<path d="M1300.5 514 H1352 V538 Q1330 531 1292 530 Z" fill="#e0aab4"/>
<path d="M1295 617 Q1320 598 1352 577 V596 Q1325 603 1295 617 Z" fill="#f2bcb8"/>
</svg>
<!-- dialog -->
<div class="a" style="left:867px;top:465px;width:420px;height:185px;background:#000;border-radius:0 4px 4px 4px"></div>
<div class="a" style="left:865px;top:463px;width:420px;height:186px;background:#f4f4e4;border-left:1px solid #a09860;border-top:1px solid #a09860;border-radius:0 6px 0 3px"></div>
<div class="a" style="left:866px;top:464px;width:419px;height:20px;background:#3c6496;border-radius:0 5px 0 0"></div>
<div class="a" style="left:866px;top:484px;width:419px;height:1px;background:#fcfce8"></div>
<div class="a" style="left:868.5px;top:469px;font-size:11.6px;color:#f0f4ff">kVASy</div>
<svg style="left:910px;top:469px" width="358" height="11" viewBox="0 0 358 11">
<defs><pattern id="dots" width="8" height="8" patternUnits="userSpaceOnUse">
<rect x="0" y="0" width="2" height="2" fill="#ececc8"/><rect x="2" y="1" width="1" height="2" fill="#000"/><rect x="1" y="2" width="2" height="1" fill="#000"/>
<rect x="4" y="4" width="2" height="2" fill="#ececc8"/><rect x="6" y="5" width="1" height="2" fill="#000"/><rect x="5" y="6" width="2" height="1" fill="#000"/>
</pattern></defs>
<rect x="0" y="0" width="357" height="11" fill="url(#dots)"/>
</svg>
<svg style="left:1270px;top:469px" width="11" height="11" viewBox="0 0 11 11"><path d="M1 1 L10 10 M10 1 L1 10" stroke="#fff" stroke-width="1.6"/></svg>
<svg style="left:900px;top:516px" width="40" height="36" viewBox="900 516 40 36">
<path d="M904 549 L921 520 L939 549 Z" fill="#101010"/>
<path d="M902.5 547 L918.5 519 H920.5 L937 547 Z" fill="#f8f820" stroke="#807020" stroke-width="1" stroke-linejoin="round"/>
<path d="M920.5 519 L937 547" stroke="#000" stroke-width="1.3"/>
<path d="M903 548 H937" stroke="#000" stroke-width="1.5"/>
<path d="M916.6 527.5 Q916.6 526 919.4 526 Q922.2 526 922.2 527.5 L921.2 538.5 H917.6 Z" fill="#000"/>
<path d="M919.4 539.8 L922.2 542.6 L919.4 545.4 L916.6 542.6 Z" fill="#000"/>
</svg>
<div class="a" style="left:972.5px;top:518.1px;font-size:12.4px;">Wurden alle Richtlinien zum Stichprobenverfahren aus</div>
<div class="a" style="left:972.5px;top:534.0px;font-size:12.4px;">den PTB-Mitteilungen eingehalten? Möchten Sie noch</div>
<div class="a" style="left:972.5px;top:549.9px;font-size:12.4px;">einmal zu Ihren Kriterien für die Loszusammenstellung</div>
<div class="a" style="left:972.5px;top:565.8px;font-size:12.4px;">zurückkehren?</div>
<div class="a" style="left:927px;top:612px;width:174px;height:27px;background:#e0e0cc;border:1px solid #000;border-bottom-width:2px;border-right-width:2px;border-radius:9px 2px 2px 9px"></div>
<div class="a" style="left:937px;top:615px;width:159px;height:1px;background:repeating-linear-gradient(90deg,#000 0 2px,transparent 2px 3px)"></div><div class="a" style="left:937px;top:634px;width:159px;height:1px;background:repeating-linear-gradient(90deg,#000 0 2px,transparent 2px 3px)"></div>
<div class="a" style="left:998px;top:619.3px;font-size:12.3px;"><u style="text-underline-offset:1.5px">Z</u>urück</div>
<div class="a" style="left:1102px;top:613px;width:172px;height:25px;background:#e0e0cc;border:1px solid #606060;border-bottom-color:#000;border-right-color:#202020;border-radius:8px"></div>
<div class="a" style="left:1135.3px;top:618.7px;font-size:12.8px;"><u style="text-underline-offset:1.5px">Z</u>usammenstellen</div>
<!-- red annotations -->
<svg style="left:0;top:0" width="1352" height="718" viewBox="0 0 1352 718" fill="none" stroke="#dc2626" stroke-width="4" stroke-linecap="round" stroke-linejoin="round">
<path d="M426 633.5 L503 632.5 C532 625 536 610 500 598 C475 588 445 584 420 593 C405 600 401 615 403.5 627 C406 634 420 637 434 638.5"/>
<path d="M1187 652.5 C1240 649 1300 640 1312.5 622 C1318 602 1262 588 1180 584.5 C1140 584 1116 598 1102 614 C1096 630 1110 646 1150 650.5 L1187 652.5"/>
<path d="M1186 655 L1193.5 647.5"/>
</svg>

</body></html>
